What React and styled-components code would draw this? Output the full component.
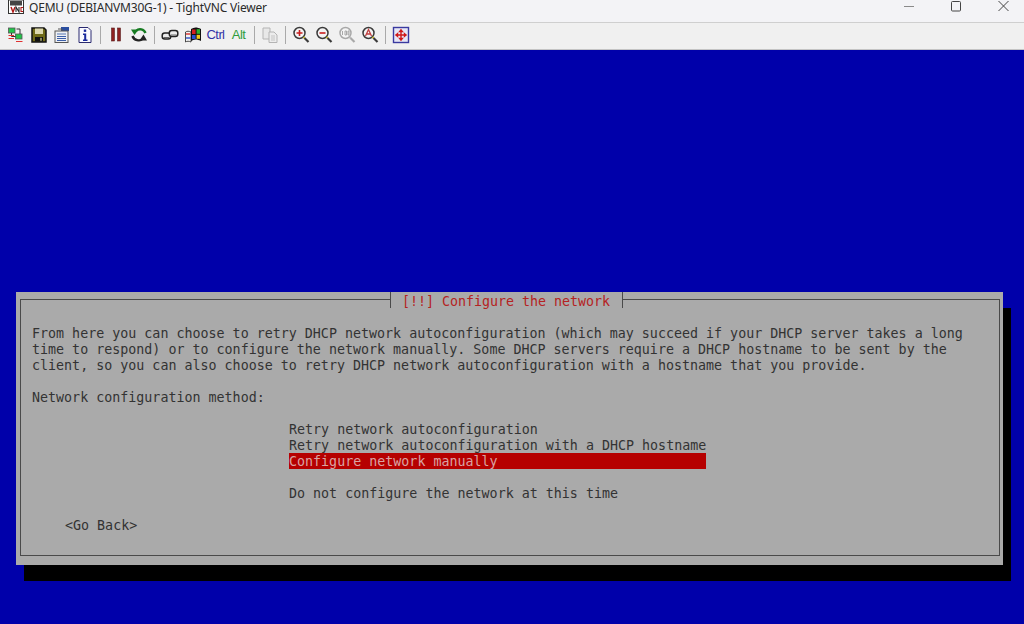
import React from "react";
import styled, { createGlobalStyle } from "styled-components";

const Global = createGlobalStyle`
  html, body { margin: 0; padding: 0; background: #0000aa; overflow: hidden; }
`;
const Page = styled.div`
  width: 1024px; height: 624px; display: flex; flex-direction: column; overflow: hidden;
`;
const TitleBar = styled.div`
  height: 22px; flex: none; display: flex; align-items: flex-start; background: #f3f3f6;
  border-bottom: 1px solid #cfcfcf; box-sizing: content-box;
`;
const AppIcon = styled.svg`
  width: 16px; height: 14px; margin-left: 8px; flex: none; display: block;
`;
const TitleText = styled.div`
  margin-left: 5px; font: 12px/16px "Noto Sans", sans-serif; color: #2a2a2a; white-space: nowrap;
  letter-spacing: -0.2px;
`;
const WindowButtons = styled.div`
  margin-left: auto; display: flex;
`;
const WindowButton = styled.div`
  width: 47px; height: 13px; padding-left: 5px; box-sizing: border-box; display: flex; justify-content: center;
`;
const Toolbar = styled.div`
  height: 26px; flex: none; display: flex; align-items: center; padding-left: 4px;
  background: #f0f0f0; border-bottom: 1px solid #c4c4c4;
`;
const ToolButton = styled.div`
  width: 23px; height: 23px; display: flex; align-items: center; justify-content: center; flex: none;
  margin-top: -3px;
`;
const KeyLabel = styled.span`
  font: 13px/16px "Liberation Sans", sans-serif; color: ${(p) => p.$color}; letter-spacing: -0.6px;
`;
const Separator = styled.div`
  width: 1px; height: 18px; margin: -2px 3.5px 0; background: #a9a9a9; flex: none;
`;
const Screen = styled.div`
  flex: 1; background: #0000aa; padding: 242px 0 0 16px; display: flex; align-items: flex-start;
`;
const Dialog = styled.div`
  width: 987px; height: 273px; background: #aaaaaa; box-shadow: 8px 16px 0 #000; box-sizing: border-box;
  padding: 7px 3px 9px 4px; display: flex;
`;
const Frame = styled.div`
  position: relative; flex: 1; border: 1px solid #4a4a4a; padding: 25px 0 0 11px;
  font: 13.33px/18px "DejaVu Sans Mono", monospace; color: #333333;
`;
const FrameTitle = styled.div`
  position: absolute; top: -8px; left: 369px; width: 233px; height: 16px; box-sizing: border-box;
  background: #aaaaaa; border-left: 1px solid #4a4a4a; border-right: 1px solid #4a4a4a;
  padding-left: 11px; color: #b52222; white-space: pre; line-height: 20px; letter-spacing: -0.02px;
`;
const Line = styled.div`
  height: 16px; white-space: pre; margin-top: ${(p) => (p.$gap || 0) * 16}px;
`;
const Menu = styled.div`
  width: 417px; margin: 16px 0 0 257px;
`;
const MenuItem = styled.div`
  height: 16px; white-space: pre; margin-top: ${(p) => (p.$gap || 0) * 16}px;
  background: ${(p) => (p.$selected ? "#b60000" : "transparent")};
  color: ${(p) => (p.$selected ? "#d9a3a3" : "inherit")};
`;
const BackButton = styled.div`
  margin: 16px 0 0 33px; height: 16px; white-space: pre;
`;

const Icon = ({ children, size = 18 }) => (
  <svg width={size} height={size} viewBox="0 0 18 18" style={{ display: "block" }}>{children}</svg>
);

const Magnifier = ({ children, muted }) => {
  const c = muted ? "#a8a8a8" : "#3a3a3a";
  return (
    <Icon>
      <circle cx="7.5" cy="7" r="5.5" fill="#f4f4f4" stroke={c} strokeWidth="1.5" />
      <path d="M11.5 11 L12.5 12" stroke={muted ? "#b8b8b8" : "#c8b820"} strokeWidth="2" />
      <path d="M12.5 12 L16.5 16" stroke={c} strokeWidth="2.2" />
      {children}
    </Icon>
  );
};

export default function App() {
  return (
    <Page>
      <Global />
      <TitleBar>
        <AppIcon viewBox="0 0 16 14">
          <rect x="0.5" y="0" width="15" height="13.5" fill="#fff" stroke="#333" />
          <rect x="2" y="1" width="12" height="4.5" fill="#444" />
          <path d="M3 7 L5 12 L7 7" fill="none" stroke="#b01818" strokeWidth="1.4" />
          <path d="M8 12 V7 L11 12 V7" fill="none" stroke="#2a2a2a" strokeWidth="1.1" />
          <path d="M15 7.5 H13 V11.5 H15" fill="none" stroke="#b01818" strokeWidth="1.1" />
        </AppIcon>
        <TitleText>QEMU (DEBIANVM30G-1) - TightVNC Viewer</TitleText>
        <WindowButtons>
          <WindowButton>
            <svg width="10" height="13" viewBox="0 0 10 13"><path d="M0 6.5 H10" stroke="#8a8a8a" strokeWidth="1" /></svg>
          </WindowButton>
          <WindowButton>
            <svg width="10" height="13" viewBox="0 0 10 13"><rect x="0.5" y="1.5" width="9" height="9.5" rx="1" fill="none" stroke="#444" strokeWidth="1" /></svg>
          </WindowButton>
          <WindowButton>
            <svg width="11" height="13" viewBox="0 0 11 13"><path d="M0.5 1 L10.5 11 M10.5 1 L0.5 11" stroke="#444" strokeWidth="1" /></svg>
          </WindowButton>
        </WindowButtons>
      </TitleBar>
      <Toolbar>
        <ToolButton>
          <Icon>
            <rect x="1.5" y="2" width="6.5" height="5" fill="#22c44a" stroke="#555" strokeWidth="0.8" />
            <rect x="8.5" y="8" width="6.5" height="5" fill="#22c44a" stroke="#555" strokeWidth="0.8" />
            <path d="M4.5 7 V10.5 H8.5" fill="none" stroke="#333" />
            <path d="M9.5 3 H13 V8" fill="none" stroke="#333" />
            <path d="M1.5 9.5 H7 M1.5 12.5 H7 M9 15.5 H15.5" stroke="#e03030" strokeWidth="1.2" />
          </Icon>
        </ToolButton>
        <ToolButton>
          <Icon>
            <path d="M2 2 H14 L16 4 V16 H2 Z" fill="#6f6a18" stroke="#111" strokeWidth="1.5" />
            <rect x="5" y="2.5" width="8" height="5.5" fill="#dcd8b0" />
            <rect x="5" y="11" width="8" height="4.5" fill="#111" />
            <rect x="10" y="11.8" width="2" height="3" fill="#8a8a60" />
          </Icon>
        </ToolButton>
        <ToolButton>
          <Icon>
            <rect x="8" y="1" width="8" height="4" fill="#2a4ea0" />
            <rect x="2" y="5" width="13" height="11.5" fill="#eef0f4" stroke="#555" />
            <path d="M5 3 H9 V5" fill="none" stroke="#555" />
            <path d="M4 8 H13" stroke="#8aa0c8" strokeWidth="1.5" />
            <path d="M4 10.5 H13 M4 12.5 H13 M4 14.5 H13" stroke="#3a5ea8" />
          </Icon>
        </ToolButton>
        <ToolButton>
          <Icon>
            <path d="M3 1.5 H12 L15 4.5 V16.5 H3 Z" fill="#fbfbff" stroke="#2a2a70" />
            <rect x="7.8" y="3.5" width="2.4" height="2.4" fill="#1a2a9c" />
            <path d="M7 7.5 H10.2 V13.5 H11.5 V15 H7 V13.5 H8.2 V9 H7 Z" fill="#1a2a9c" />
          </Icon>
        </ToolButton>
        <Separator />
        <ToolButton>
          <Icon>
            <rect x="4.5" y="2" width="3" height="13" fill="#8e1f1f" stroke="#5a2020" strokeWidth="0.6" />
            <rect x="10.5" y="2" width="3" height="13" fill="#8e1f1f" stroke="#5a2020" strokeWidth="0.6" />
          </Icon>
        </ToolButton>
        <ToolButton>
          <Icon>
            <path d="M15.5 7 C14 3 9 2 6 5" fill="none" stroke="#157a20" strokeWidth="2.4" />
            <path d="M1 3.5 H8.5 L4.5 9 Z" fill="#157a20" />
            <path d="M2.5 10 C4 14.5 10 15.5 12.5 13" fill="none" stroke="#222" strokeWidth="2.4" />
            <path d="M9.5 14.5 H17 L13.5 8.5 Z" fill="#222" />
          </Icon>
        </ToolButton>
        <Separator />
        <ToolButton>
          <Icon>
            <rect x="1.2" y="7" width="8.5" height="6" rx="2.5" fill="#ececec" stroke="#222" strokeWidth="1.5" />
            <rect x="8.3" y="4.5" width="8.5" height="6" rx="2.5" fill="#ececec" stroke="#222" strokeWidth="1.5" />
            <path d="M2.5 11.5 H8 M10 9 H15.5" stroke="#666" strokeWidth="1.2" />
          </Icon>
        </ToolButton>
        <ToolButton>
          <Icon>
            <path d="M1.5 6 C3 5 5 5 7 6 V16 C5 15 3 15 1.5 16 Z" fill="#f2f2f2" stroke="#222" strokeWidth="0.8" />
            <path d="M2 8 H6.5" stroke="#d93030" strokeWidth="1.4" />
            <path d="M2 12 H6.5" stroke="#3050c8" strokeWidth="1.4" />
            <path d="M7 3 C10 1 13 1 17 3 V15 C13 13 10 13 7 15 Z" fill="#111" />
            <rect x="8" y="3.5" width="3.6" height="4.5" fill="#d42020" />
            <rect x="12.6" y="3.2" width="3.4" height="4.6" fill="#2eb02e" />
            <rect x="8" y="9" width="3.6" height="4" fill="#2a50d0" />
            <rect x="12.6" y="8.8" width="3.4" height="4" fill="#f0c818" />
          </Icon>
        </ToolButton>
        <ToolButton><KeyLabel $color="#3333a6">Ctrl</KeyLabel></ToolButton>
        <ToolButton><KeyLabel $color="#2f9c3c">Alt</KeyLabel></ToolButton>
        <Separator />
        <ToolButton>
          <Icon>
            <path d="M2 2 H9 V13 H2 Z" fill="#e8e8e8" stroke="#b4b4b4" />
            <path d="M8 6 H13 L16 9 V16.5 H8 Z" fill="#ececec" stroke="#b4b4b4" />
            <path d="M10 10 H14 M10 12 H14 M10 14 H14" stroke="#c4c4c4" />
          </Icon>
        </ToolButton>
        <Separator />
        <ToolButton>
          <Magnifier><path d="M4.5 7 H10.5 M7.5 4 V10" stroke="#c81e1e" strokeWidth="1.6" /></Magnifier>
        </ToolButton>
        <ToolButton>
          <Magnifier><path d="M4.5 7 H10.5" stroke="#c81e1e" strokeWidth="1.6" /></Magnifier>
        </ToolButton>
        <ToolButton>
          <Magnifier muted><path d="M4.5 5 V9 M7 5 H8.5 V9 H7 Z M10 5 H11 V9 H10 Z" fill="none" stroke="#a8a8a8" /></Magnifier>
        </ToolButton>
        <ToolButton>
          <Magnifier><path d="M4.5 10 L7.5 3.5 L10.5 10 M5.7 8 H9.3" fill="none" stroke="#c04040" strokeWidth="1.3" /></Magnifier>
        </ToolButton>
        <Separator />
        <ToolButton>
          <Icon>
            <rect x="1.5" y="1.5" width="15" height="15" fill="#e6e6f6" stroke="#3a3aa0" strokeWidth="1.4" />
            <path d="M9 2.8 L11.8 6.2 H6.2 Z M9 15.2 L11.8 11.8 H6.2 Z M2.8 9 L6.2 6.2 V11.8 Z M15.2 9 L11.8 6.2 V11.8 Z" fill="#d01818" />
            <path d="M6 9 H12 M9 6 V12" stroke="#d01818" strokeWidth="1.4" />
          </Icon>
        </ToolButton>
      </Toolbar>
      <Screen>
        <Dialog>
          <Frame>
            <FrameTitle>[!!] Configure the network</FrameTitle>
            <Line>From here you can choose to retry DHCP network autoconfiguration (which may succeed if your DHCP server takes a long</Line>
            <Line>time to respond) or to configure the network manually. Some DHCP servers require a DHCP hostname to be sent by the</Line>
            <Line>client, so you can also choose to retry DHCP network autoconfiguration with a hostname that you provide.</Line>
            <Line $gap={1}>Network configuration method:</Line>
            <Menu>
              <MenuItem>Retry network autoconfiguration</MenuItem>
              <MenuItem>Retry network autoconfiguration with a DHCP hostname</MenuItem>
              <MenuItem $selected>Configure network manually</MenuItem>
              <MenuItem $gap={1}>Do not configure the network at this time</MenuItem>
            </Menu>
            <BackButton>&lt;Go Back&gt;</BackButton>
          </Frame>
        </Dialog>
      </Screen>
    </Page>
  );
}
